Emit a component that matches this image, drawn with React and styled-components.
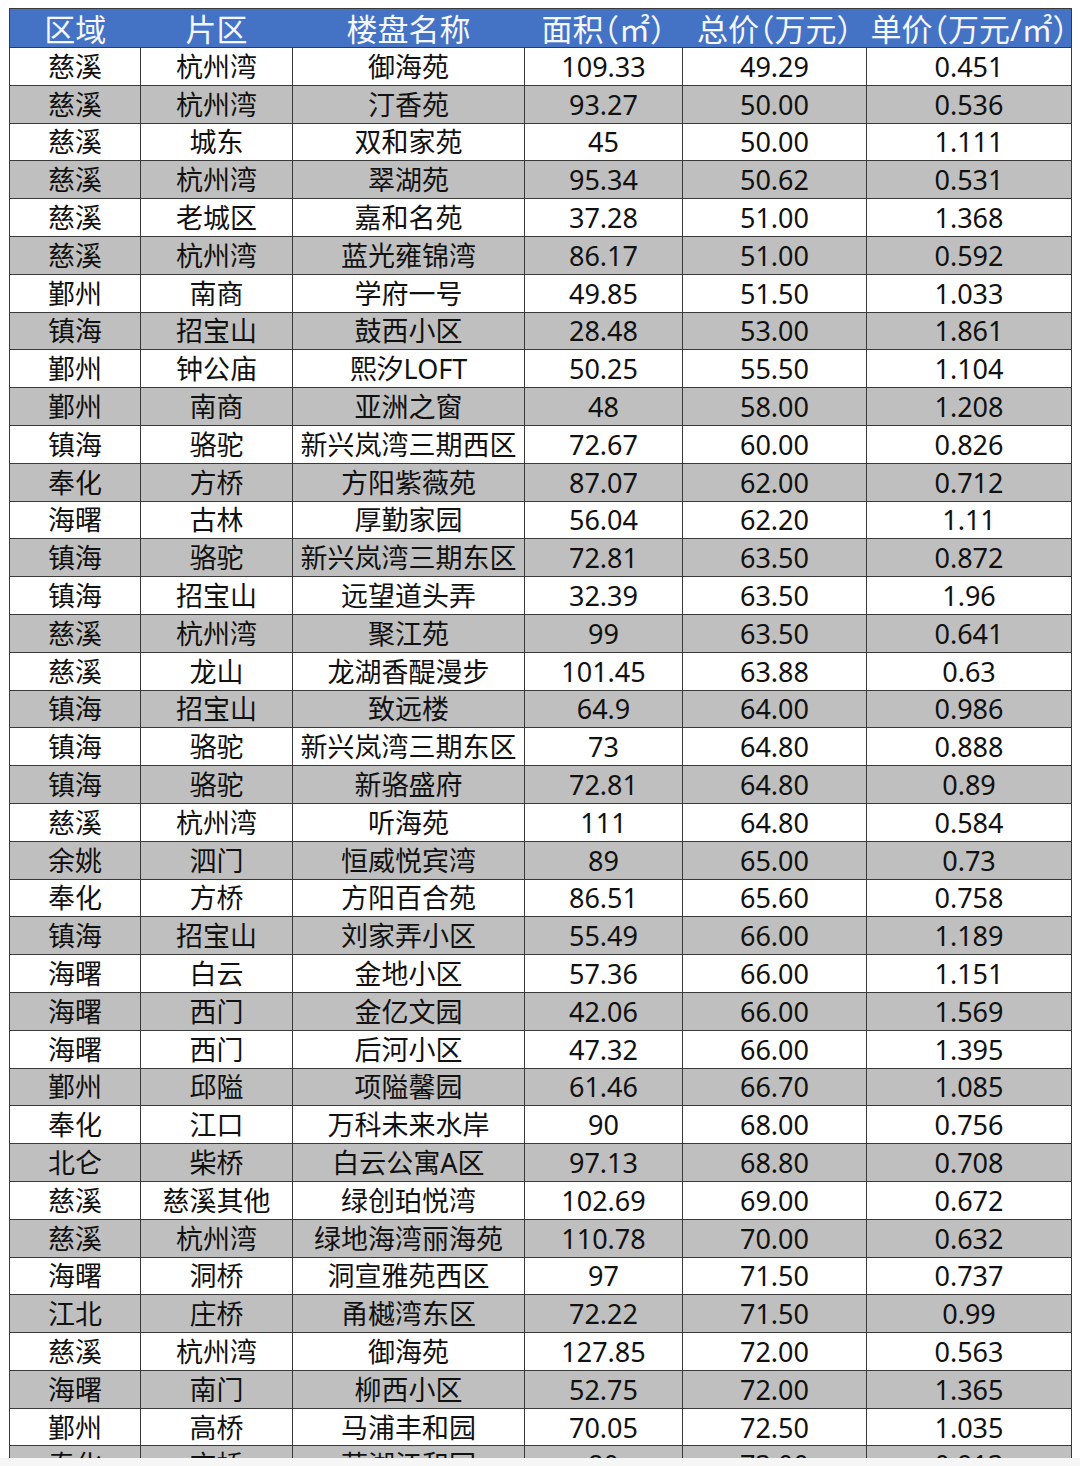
import styled, { createGlobalStyle } from "styled-components";

const GlobalStyle = createGlobalStyle`
  html, body {
    margin: 0;
    padding: 0;
    background: #f6f6f6;
  }
`;

const columns = [
  { title: "区域", width: 131 },
  { title: "片区", width: 152 },
  { title: "楼盘名称", width: 232 },
  { title: "面积（㎡）", width: 158 },
  { title: "总价（万元）", width: 184 },
  { title: "单价（万元/㎡）", width: 205, left: true },
];

const rows = [
  ["慈溪", "杭州湾", "御海苑", "109.33", "49.29", "0.451"],
  ["慈溪", "杭州湾", "汀香苑", "93.27", "50.00", "0.536"],
  ["慈溪", "城东", "双和家苑", "45", "50.00", "1.111"],
  ["慈溪", "杭州湾", "翠湖苑", "95.34", "50.62", "0.531"],
  ["慈溪", "老城区", "嘉和名苑", "37.28", "51.00", "1.368"],
  ["慈溪", "杭州湾", "蓝光雍锦湾", "86.17", "51.00", "0.592"],
  ["鄞州", "南商", "学府一号", "49.85", "51.50", "1.033"],
  ["镇海", "招宝山", "鼓西小区", "28.48", "53.00", "1.861"],
  ["鄞州", "钟公庙", "熙汐LOFT", "50.25", "55.50", "1.104"],
  ["鄞州", "南商", "亚洲之窗", "48", "58.00", "1.208"],
  ["镇海", "骆驼", "新兴岚湾三期西区", "72.67", "60.00", "0.826"],
  ["奉化", "方桥", "方阳紫薇苑", "87.07", "62.00", "0.712"],
  ["海曙", "古林", "厚勤家园", "56.04", "62.20", "1.11"],
  ["镇海", "骆驼", "新兴岚湾三期东区", "72.81", "63.50", "0.872"],
  ["镇海", "招宝山", "远望道头弄", "32.39", "63.50", "1.96"],
  ["慈溪", "杭州湾", "聚江苑", "99", "63.50", "0.641"],
  ["慈溪", "龙山", "龙湖香醍漫步", "101.45", "63.88", "0.63"],
  ["镇海", "招宝山", "致远楼", "64.9", "64.00", "0.986"],
  ["镇海", "骆驼", "新兴岚湾三期东区", "73", "64.80", "0.888"],
  ["镇海", "骆驼", "新骆盛府", "72.81", "64.80", "0.89"],
  ["慈溪", "杭州湾", "听海苑", "111", "64.80", "0.584"],
  ["余姚", "泗门", "恒威悦宾湾", "89", "65.00", "0.73"],
  ["奉化", "方桥", "方阳百合苑", "86.51", "65.60", "0.758"],
  ["镇海", "招宝山", "刘家弄小区", "55.49", "66.00", "1.189"],
  ["海曙", "白云", "金地小区", "57.36", "66.00", "1.151"],
  ["海曙", "西门", "金亿文园", "42.06", "66.00", "1.569"],
  ["海曙", "西门", "后河小区", "47.32", "66.00", "1.395"],
  ["鄞州", "邱隘", "项隘馨园", "61.46", "66.70", "1.085"],
  ["奉化", "江口", "万科未来水岸", "90", "68.00", "0.756"],
  ["北仑", "柴桥", "白云公寓A区", "97.13", "68.80", "0.708"],
  ["慈溪", "慈溪其他", "绿创珀悦湾", "102.69", "69.00", "0.672"],
  ["慈溪", "杭州湾", "绿地海湾丽海苑", "110.78", "70.00", "0.632"],
  ["海曙", "洞桥", "洞宣雅苑西区", "97", "71.50", "0.737"],
  ["江北", "庄桥", "甬樾湾东区", "72.22", "71.50", "0.99"],
  ["慈溪", "杭州湾", "御海苑", "127.85", "72.00", "0.563"],
  ["海曙", "南门", "柳西小区", "52.75", "72.00", "1.365"],
  ["鄞州", "高桥", "马浦丰和园", "70.05", "72.50", "1.035"],
  ["奉化", "方桥", "莼湖江和园", "80", "73.00", "0.913"],
];

const Page = styled.div`
  background: #ffffff;
  padding: 8px 0 0 9px;
  height: 1450px;
  overflow: hidden;
`;

const Table = styled.table`
  border-collapse: collapse;
  table-layout: fixed;
  width: 1062px;
  font-family: "Noto Sans", "Noto Sans CJK SC", sans-serif;
  color: #111;
`;

const HeadCell = styled.th`
  background: #4472c4;
  color: #f4f7ff;
  font-weight: 400;
  font-size: 31px;
  font-feature-settings: "halt";
  line-height: 1;
  height: 35px;
  padding: ${(p) => (p.$left ? "3px 0 0 4px" : "3px 0 0")};
  text-align: ${(p) => (p.$left ? "left" : "center")};
  vertical-align: middle;
  white-space: nowrap;
  overflow: hidden;
  border-top: 1px solid #3a3a3a;
  border-bottom: 1px solid #3a3a3a;
  &:first-child {
    border-left: 1px solid #3a3a3a;
  }
  &:last-child {
    border-right: 1px solid #3a3a3a;
  }
`;

const Row = styled.tr`
  height: 37.8px;
  background: ${(p) => (p.$shade ? "#bfbfbf" : "#ffffff")};
`;

const Cell = styled.td`
  border: 1px solid #3a3a3a;
  font-size: 27px;
  line-height: 1;
  padding: 0;
  text-align: center;
  vertical-align: middle;
  white-space: nowrap;
  overflow: hidden;
`;

export default function App() {
  return (
    <>
      <GlobalStyle />
      <Page>
        <Table>
          <colgroup>
            {columns.map((c) => (
              <col key={c.title} style={{ width: c.width }} />
            ))}
          </colgroup>
          <thead>
            <tr>
              {columns.map((c) => (
                <HeadCell key={c.title} $left={c.left}>
                  {c.title}
                </HeadCell>
              ))}
            </tr>
          </thead>
          <tbody>
            {rows.map((r, i) => (
              <Row key={i} $shade={i % 2 === 1}>
                {r.map((v, j) => (
                  <Cell key={j}>{v}</Cell>
                ))}
              </Row>
            ))}
          </tbody>
        </Table>
      </Page>
    </>
  );
}
